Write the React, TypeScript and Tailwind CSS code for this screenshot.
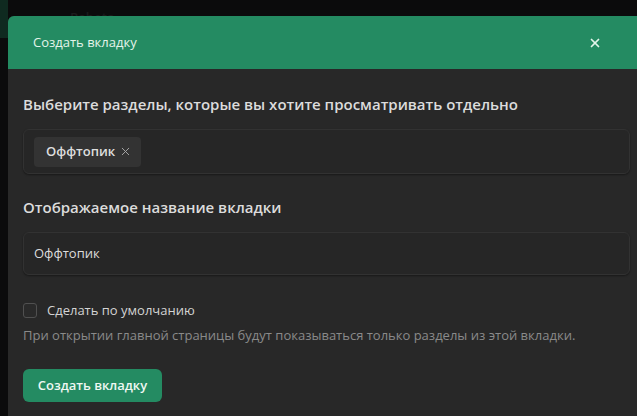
import { X } from "lucide-react";

const App = () => {
  return (
    <div
      className="relative h-[416px] w-[637px] overflow-hidden bg-[#0b0b0c]"
      style={{ fontFamily: '"Open Sans", "Noto Sans", sans-serif' }}
    >
      {/* page behind the dialog */}
      <div className="absolute left-0 top-0 h-[38px] w-[8px] bg-[#0f2a20]" />
      <div className="absolute left-[70px] top-[8px] text-[13px] font-semibold text-[#1b1b1c]">
        Rabota
      </div>

      <div className="absolute left-[8px] top-[16px] w-[640px] overflow-hidden rounded-t-[6px] bg-[#282828]">
        <div className="flex h-[53px] items-center justify-between bg-[#248b62] pl-[25px] pr-[46px]">
          <span className="text-[13px] text-[#e4f4ea]">Создать вкладку</span>
          <X size={14} strokeWidth={3} className="text-[#e4f4ea]" />
        </div>

        <div className="flex flex-col pl-[15px] pr-[18px] pt-[25px] pb-[20px]">
          <h2 className="text-[15px] font-semibold leading-[20px] text-[#dcdcdc]">
            Выберите разделы, которые вы хотите просматривать отдельно
          </h2>
          <div className="mt-[15px] flex h-[45px] items-center rounded-[6px] border border-[#323232] bg-[#262626] px-[10px] shadow-[0_1px_2px_rgba(0,0,0,0.4)]">
            <div className="flex h-[30px] items-center gap-[4px] rounded-[4px] bg-[#333333] pl-[12px] pr-[9px]">
              <span className="text-[13px] font-semibold text-[#dedede]">Оффтопик</span>
              <X size={13} strokeWidth={1.75} className="text-[#a8a8a8]" />
            </div>
          </div>

          <h2 className="mt-[23px] text-[15px] font-semibold leading-[20px] text-[#dcdcdc]">
            Отображаемое название вкладки
          </h2>
          <div className="mt-[15px] flex h-[43px] items-center rounded-[6px] border border-[#323232] bg-[#262626] px-[10px] shadow-[0_1px_2px_rgba(0,0,0,0.4)]">
            <span className="text-[13px] text-[#dcdcdc]">Оффтопик</span>
          </div>

          <label className="mt-[26px] flex items-center gap-[10px]">
            <span className="h-[15px] w-[14px] rounded-[3px] border border-[#505050] bg-[#2a2a2a]" />
            <span className="text-[13px] text-[#d4d4d4]">Сделать по умолчанию</span>
          </label>
          <p className="mt-[5px] text-[13px] text-[#8a8a8a]">
            При открытии главной страницы будут показываться только разделы из этой вкладки.
          </p>

          <button className="mt-[24px] h-[33px] w-[139px] rounded-[6px] bg-[#248b62] text-[13px] font-semibold text-[#eef8f2]">
            Создать вкладку
          </button>
        </div>
      </div>
    </div>
  );
};

export default App;
